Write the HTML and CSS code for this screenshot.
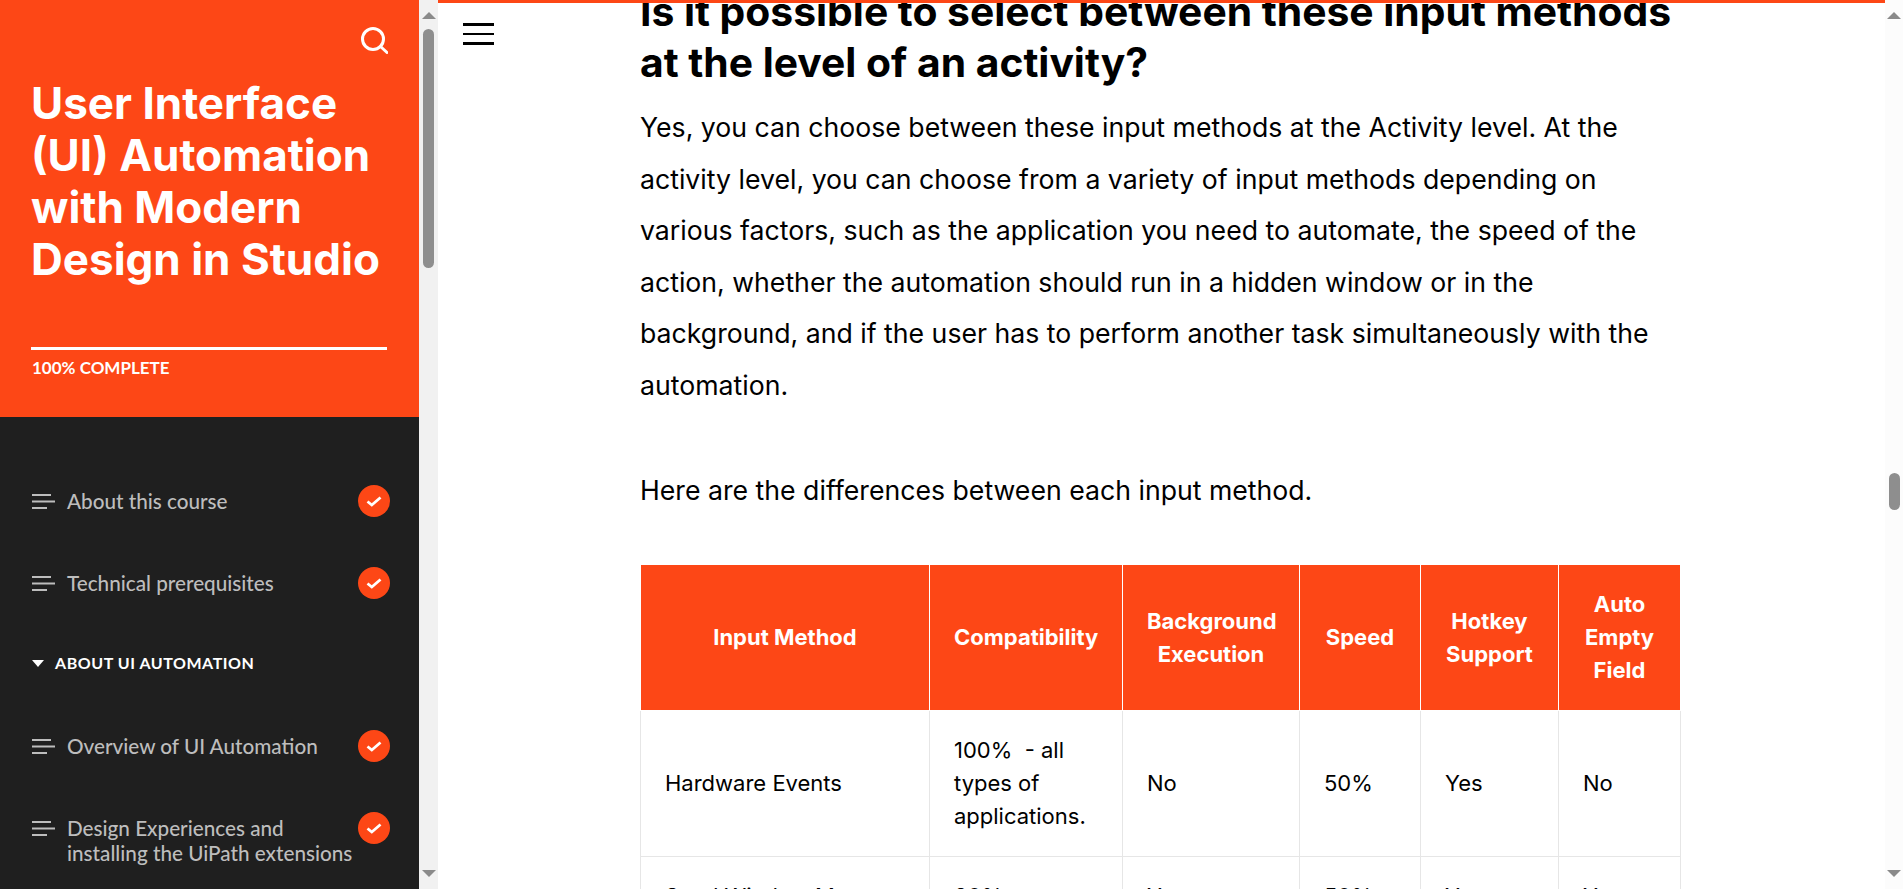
FILE: index.html
```html
<!DOCTYPE html>
<html lang="en">
<head>
  <meta charset="UTF-8" />
  <title>User Interface (UI) Automation with Modern Design in Studio</title>
  <link rel="stylesheet" href="styles.css">
</head>
<body>

  <aside class="sidebar">
    <div class="course-head">
      <div class="search-row">
        <svg class="search-icon" viewBox="0 0 28 28" width="28" height="28" fill="none" stroke="#fff" stroke-width="3">
          <circle cx="13" cy="13" r="10.5" />
          <path d="M20.5 20.5 L27 26.5" stroke-linecap="round" />
        </svg>
      </div>
      <h1 class="course-title">User Interface (UI) Automation with Modern Design in Studio</h1>
      <div class="progress-line"></div>
      <div class="progress-label">100% COMPLETE</div>
    </div>

    <nav class="lesson-list">
      <a class="lesson">
        <svg class="lines-icon" viewBox="0 0 23 15" width="23" height="15"><path d="M0 1h19M0 7.5h23M0 14h15" /></svg>
        <span class="lesson-name">About this course</span>
        <span class="check"><svg viewBox="0 0 16 16" width="16" height="16"><path d="M1.5 8.5 L5.8 12 L14.5 4.5" /></svg></span>
      </a>
      <a class="lesson">
        <svg class="lines-icon" viewBox="0 0 23 15" width="23" height="15"><path d="M0 1h19M0 7.5h23M0 14h15" /></svg>
        <span class="lesson-name">Technical prerequisites</span>
        <span class="check"><svg viewBox="0 0 16 16" width="16" height="16"><path d="M1.5 8.5 L5.8 12 L14.5 4.5" /></svg></span>
      </a>
      <div class="section-title"><span class="caret"></span>ABOUT UI AUTOMATION</div>
      <a class="lesson">
        <svg class="lines-icon" viewBox="0 0 23 15" width="23" height="15"><path d="M0 1h19M0 7.5h23M0 14h15" /></svg>
        <span class="lesson-name">Overview of UI Automation</span>
        <span class="check"><svg viewBox="0 0 16 16" width="16" height="16"><path d="M1.5 8.5 L5.8 12 L14.5 4.5" /></svg></span>
      </a>
      <a class="lesson">
        <svg class="lines-icon" viewBox="0 0 23 15" width="23" height="15"><path d="M0 1h19M0 7.5h23M0 14h15" /></svg>
        <span class="lesson-name">Design Experiences and installing the UiPath extensions</span>
        <span class="check"><svg viewBox="0 0 16 16" width="16" height="16"><path d="M1.5 8.5 L5.8 12 L14.5 4.5" /></svg></span>
      </a>
    </nav>
  </aside>

  <div class="scrollbar side-scroll">
    <span class="arrow-up"></span>
    <span class="thumb side-thumb"></span>
    <span class="arrow-down"></span>
  </div>

  <main class="lesson-main">
    <div class="top-progress"></div>
    <button class="menu-button"><span></span><span></span><span></span></button>

    <article class="lesson-body">
      <h2>Is it possible to select between these input methods at the level of an activity?</h2>
      <p>Yes, you can choose between these input methods at the Activity level. At the activity level, you can choose from a variety of input methods depending on various factors, such as the application you need to automate, the speed of the action, whether the automation should run in a hidden window or in the background, and if the user has to perform another task simultaneously with the automation.</p>
      <p class="intro-table">Here are the differences between each input method.</p>

      <table class="methods">
        <colgroup>
          <col class="col-1"><col class="col-2"><col class="col-3"><col class="col-4"><col class="col-5"><col class="col-6">
        </colgroup>
        <thead>
          <tr>
            <th>Input Method</th>
            <th>Compatibility</th>
            <th>Background Execution</th>
            <th>Speed</th>
            <th>Hotkey Support</th>
            <th>Auto Empty Field</th>
          </tr>
        </thead>
        <tbody>
          <tr>
            <td>Hardware Events</td>
            <td>100% &nbsp;- all types of applications.</td>
            <td>No</td>
            <td>50%</td>
            <td>Yes</td>
            <td>No</td>
          </tr>
          <tr>
            <td class="one-line">Send Window Messages</td>
            <td>80%</td>
            <td>Yes</td>
            <td>50%</td>
            <td>Yes</td>
            <td>Yes</td>
          </tr>
        </tbody>
      </table>
    </article>
  </main>

  <div class="scrollbar page-scroll">
    <span class="arrow-up"></span>
    <span class="thumb page-thumb"></span>
    <span class="arrow-down"></span>
  </div>

</body>
</html>
```

FILE: styles.css
```css
* {
  box-sizing: border-box;
  margin: 0;
  padding: 0;
}

html, body {
  height: 100%;
}

body {
  display: flex;
  height: 889px;
  overflow: hidden;
  background-color: #fff;
  color: #000;
  font-family: Inter, 'Liberation Sans', sans-serif;
}

/* sidebar */
.sidebar {
  flex: 0 0 419px;
  display: flex;
  flex-direction: column;
  background-color: #1f1f1f;
  overflow: hidden;
}

.course-head {
  flex: 0 0 417px;
  padding: 26px 32px 0 31px;
  background-color: #fd4716;
  color: #fff;
}

.search-row {
  display: flex;
  justify-content: flex-end;
  height: 51px;
}

.search-icon {
  margin-right: -1px;
}

.course-title {
  font-size: 44px;
  line-height: 52px;
  font-weight: 700;
  height: 208px;
}

.progress-line {
  height: 3px;
  margin-top: 62px;
  background-color: #fff;
}

.progress-label {
  margin-top: 8px;
  padding-left: 1px;
  font-family: Lato, sans-serif;
  font-size: 17px;
  line-height: 20px;
  font-weight: 700;
}

.lesson-list {
  padding: 72px 29px 0 32px;
}

.lesson {
  display: flex;
  align-items: flex-start;
  min-height: 36px;
  margin-bottom: 46px;
  color: #bdbdbd;
  font-family: Lato, sans-serif;
  font-size: 20.7px;
  line-height: 25px;
  font-weight: 500;
}

.lines-icon {
  flex: 0 0 23px;
  margin: 5px 12px 0 0;
  fill: none;
  stroke: #bdbdbd;
  stroke-width: 1.8;
}

.lesson-name {
  flex: 1;
}

.check {
  flex: 0 0 32px;
  display: flex;
  align-items: center;
  justify-content: center;
  width: 32px;
  height: 32px;
  margin-top: -4px;
  border-radius: 50%;
  background-color: #fd4716;
}

.check path {
  fill: none;
  stroke: #fff;
  stroke-width: 2.8;
}

.section-title {
  display: flex;
  align-items: center;
  margin: 7px 0 61px;
  color: #fff;
  font-family: Lato, sans-serif;
  font-size: 16px;
  line-height: 20px;
  font-weight: 700;
  letter-spacing: 0.55px;
}

.caret {
  width: 0;
  height: 0;
  margin-right: 11px;
  border-left: 6px solid transparent;
  border-right: 6px solid transparent;
  border-top: 7px solid #fff;
}

/* scrollbars */
.scrollbar {
  display: flex;
  flex-direction: column;
  align-items: center;
  flex-shrink: 0;
}

.side-scroll {
  flex-basis: 19px;
  width: 19px;
  background-color: #f1f1f1;
}

.page-scroll {
  flex-basis: 18px;
  width: 18px;
  background-color: #fcfcfc;
}

.thumb {
  display: block;
  width: 11px;
  border-radius: 6px;
  background-color: #8e8e8e;
}

.side-thumb {
  height: 239px;
  margin-top: 10px;
}

.page-thumb {
  height: 37px;
  margin-top: 454px;
}

.arrow-up {
  margin-top: 12px;
  width: 0;
  height: 0;
  border-left: 7px solid transparent;
  border-right: 7px solid transparent;
  border-bottom: 7px solid #8a8a8a;
}

.arrow-down {
  margin-top: auto;
  margin-bottom: 12px;
  width: 0;
  height: 0;
  border-left: 7px solid transparent;
  border-right: 7px solid transparent;
  border-top: 7px solid #8a8a8a;
}

/* lesson content */
.lesson-main {
  position: relative;
  flex: 1;
  overflow: hidden;
}

.top-progress {
  position: absolute;
  top: 0;
  left: 0;
  right: 0;
  height: 3px;
  background-color: #fd4716;
  z-index: 2;
}

.menu-button {
  position: absolute;
  top: 23px;
  left: 25px;
  width: 31px;
  background: none;
  border: none;
  z-index: 2;
}

.menu-button span {
  display: block;
  height: 2.5px;
  margin-bottom: 7px;
  background-color: #000;
}

.lesson-body {
  width: 1041px;
  margin: -14px 0 0 202px;
}

.lesson-body h2 {
  font-size: 40.8px;
  line-height: 51px;
  font-weight: 700;
}

.lesson-body p {
  margin-top: 14px;
  font-size: 26.67px;
  line-height: 51.6px;
}

.lesson-body .intro-table {
  margin-top: 53px;
}

.methods {
  width: 1040px;
  margin-top: 48px;
  table-layout: fixed;
  border-collapse: collapse;
  font-size: 22px;
  line-height: 33px;
}

.col-1 { width: 289px; }
.col-2 { width: 193px; }
.col-3 { width: 177px; }
.col-4 { width: 121px; }
.col-5 { width: 138px; }
.col-6 { width: 122px; }

.methods th {
  padding: 23px 24px;
  background-color: #fd4716;
  border: 1px solid #fff;
  color: #fff;
  font-weight: 700;
  text-align: center;
}

.methods td {
  padding: 23px 24px;
  border: 1px solid #e6e6e6;
  vertical-align: middle;
}

.methods .one-line {
  white-space: nowrap;
}
```
